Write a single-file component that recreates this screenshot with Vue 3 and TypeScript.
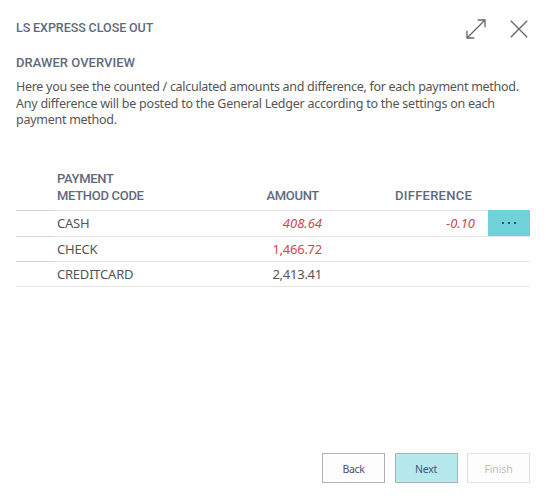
<script setup lang="ts">
interface Row {
  code: string
  amount: string
  difference: string
  negative: boolean
  selected: boolean
}

const description: string[] = [
  'Here you see the counted / calculated amounts and difference, for each payment method.',
  'Any difference will be posted to the General Ledger according to the settings on each',
  'payment method.',
]

const rows: Row[] = [
  { code: 'CASH', amount: '408.64', difference: '-0.10', negative: true, selected: true },
  { code: 'CHECK', amount: '1,466.72', difference: '', negative: true, selected: false },
  { code: 'CREDITCARD', amount: '2,413.41', difference: '', negative: false, selected: false },
]
</script>

<template>
  <main class="dialog">
    <header class="topbar">
      <h1 class="title">LS EXPRESS CLOSE OUT</h1>
      <div class="tools">
        <svg class="icon" width="20" height="20" viewBox="0 0 20 20" aria-label="Expand">
          <path d="M1 19 19 1M11.7 1H19V8.3M1 11.7V19H8.3" />
        </svg>
        <svg class="icon" width="18" height="18" viewBox="0 0 18 18" aria-label="Close">
          <path d="M.8.8 17.2 17.2M17.2.8.8 17.2" />
        </svg>
      </div>
    </header>

    <section class="intro">
      <h2 class="subtitle">DRAWER OVERVIEW</h2>
      <p class="text"><span v-for="line in description" :key="line" class="line">{{ line }}</span></p>
    </section>

    <section class="grid">
      <div class="row head">
        <span></span>
        <span class="col-code">PAYMENT<br />METHOD CODE</span>
        <span class="col-amount">AMOUNT</span>
        <span class="col-diff">DIFFERENCE</span>
        <span></span>
      </div>
      <div v-for="row in rows" :key="row.code" class="row body" :class="{ selected: row.selected }">
        <span class="selector"></span>
        <span class="cell code">{{ row.code }}</span>
        <span class="cell amount" :class="{ negative: row.negative, italic: row.selected }">{{ row.amount }}</span>
        <span class="cell diff negative italic">{{ row.difference }}</span>
        <span class="more"><template v-if="row.selected"><i></i><i></i><i></i></template></span>
      </div>
    </section>

    <footer class="actions">
      <button class="btn">Back</button>
      <button class="btn primary">Next</button>
      <button class="btn disabled" disabled>Finish</button>
    </footer>
  </main>
</template>

<style>
body {
  background: #fff;
}
</style>

<style scoped>
.dialog {
  box-sizing: border-box;
  width: 546px;
  height: 500px;
  padding: 19px 16px 17px;
  display: flex;
  flex-direction: column;
  background: #fff;
  color: #555;
  font-family: 'Noto Sans', 'Open Sans', sans-serif;
  font-size: 12.5px;
}
.topbar {
  display: flex;
  justify-content: space-between;
  align-items: flex-start;
  height: 35px;
}
.title,
.subtitle,
.head {
  margin: 0;
  font-family: Roboto, 'Liberation Sans', sans-serif;
  font-weight: 500;
  color: #5f6a7d;
}
.title {
  font-size: 12.5px;
  line-height: 17px;
  word-spacing: -0.5px;
}
.tools {
  display: flex;
  align-items: center;
  gap: 23.5px;
  padding-right: 2.5px;
}
.icon {
  display: block;
  fill: none;
  stroke: #666;
  stroke-width: 1.3;
}
.subtitle {
  font-size: 13px;
  line-height: 18px;
  letter-spacing: 0.03px;
}
.text {
  margin: 7.4px 0 0;
  line-height: 16.3px;
  letter-spacing: -0.27px;
}
.line {
  display: block;
  white-space: nowrap;
}
.line:first-child {
  letter-spacing: -0.29px;
}
.line:nth-child(2) {
  letter-spacing: -0.24px;
}
.grid {
  margin-top: 40.7px;
}
.row {
  display: grid;
  grid-template-columns: 37px 159px 110px 166px 42px;
}
.head {
  height: 41px;
  align-items: end;
  padding-bottom: 6px;
  box-sizing: border-box;
  font-size: 13px;
  line-height: 17px;
}
.col-code {
  padding-left: 4px;
  letter-spacing: -0.3px;
}
.col-amount,
.col-diff {
  text-align: right;
}
.col-amount {
  padding-right: 3px;
  letter-spacing: -0.3px;
}
.col-diff {
  padding-right: 16px;
  letter-spacing: 0.25px;
}
.body {
  height: 25px;
  box-sizing: border-box;
  border-top: 1px solid #e2e3e6;
  font-size: 13px;
  line-height: 24px;
}
.body.selected {
  height: 26px;
}
.body:last-child {
  height: 26px;
  border-bottom: 1px solid #e2e3e6;
}
.selector {
  margin-top: -1px;
  border-top: 1px solid #d3d5d9;
}
.code {
  padding-left: 4px;
  letter-spacing: -0.22px;
}
.amount,
.diff {
  text-align: right;
  letter-spacing: -0.25px;
}
.diff {
  padding-right: 13px;
}
.negative {
  color: #cf4850;
}
.italic {
  font-style: italic;
  letter-spacing: 0;
}
.selected .more {
  margin-top: -1px;
  background: #70d2d9;
  display: flex;
  align-items: center;
  justify-content: center;
  gap: 4px;
}
.more i {
  width: 2px;
  height: 2px;
  background: #34545b;
}
.actions {
  margin-top: auto;
  display: flex;
  justify-content: flex-end;
  gap: 9.5px;
}
.btn {
  width: 63px;
  height: 30px;
  padding: 1px 0 0;
  border: 1px solid #b0b0b0;
  border-radius: 0;
  background: #fdfdfd;
  color: #4a5276;
  font: 10.5px 'Noto Sans', 'Open Sans', sans-serif;
  letter-spacing: -0.3px;
}
.primary {
  background: #b5e9eb;
  color: #3d5874;
}
.disabled {
  border-color: #e1e1e1;
  color: #bdbdbd;
  letter-spacing: -0.15px;
}
</style>
